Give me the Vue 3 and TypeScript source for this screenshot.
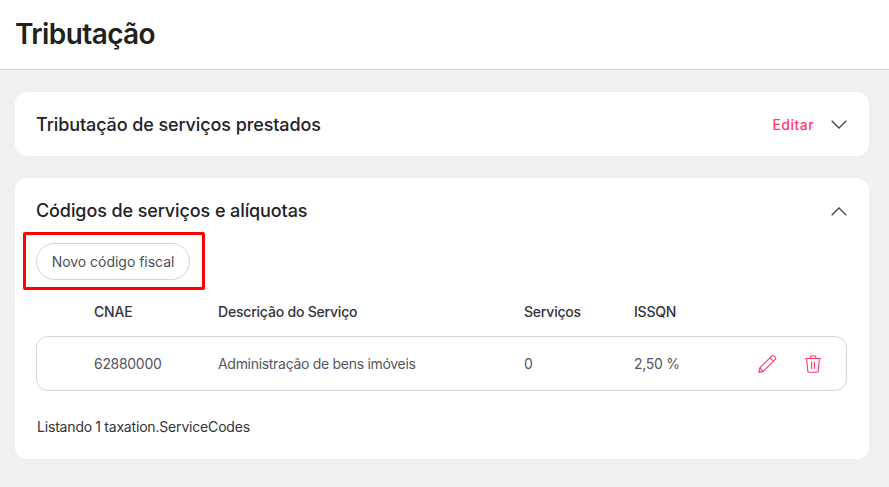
<template>
  <div class="page">
    <header class="page-header">
      <h1 class="page-title">Tributação</h1>
    </header>

    <main class="content">
      <section class="card card--closed">
        <h2 class="card__title">Tributação de serviços prestados</h2>
        <div class="card__actions">
          <a class="edit-link">Editar</a>
          <svg class="chevron" width="16" height="9" viewBox="0 0 16 9" fill="none">
            <path d="M.7.8 8 8 15.3.8" stroke="#444" stroke-width="1.3" />
          </svg>
        </div>
      </section>

      <section class="card card--open">
        <div class="card__head">
          <h2 class="card__title">Códigos de serviços e alíquotas</h2>
          <svg class="chevron" width="16" height="9" viewBox="0 0 16 9" fill="none">
            <path d="M.7 8.2 8 1l7.3 7.2" stroke="#444" stroke-width="1.3" />
          </svg>
        </div>

        <div class="new-code">
          <button class="new-code__btn">Novo código fiscal</button>
          <span class="new-code__mark" />
        </div>

        <div class="grid grid--head">
          <span v-for="col in columns" :key="col">{{ col }}</span>
        </div>

        <div v-for="row in rows" :key="row.cnae" class="grid grid--row">
          <span>{{ row.cnae }}</span>
          <span>{{ row.description }}</span>
          <span>{{ row.services }}</span>
          <span>{{ row.issqn }}</span>
          <div class="row-actions">
            <svg width="20" height="20" viewBox="0 0 20 20" fill="none" stroke="#ff3d68" stroke-width="1.1" stroke-linejoin="round">
              <path d="M1.8 18.4 2.8 14 14.6 2.2a2 2 0 0 1 2.8 0l.6.6a2 2 0 0 1 0 2.8L6.2 17.4Z" />
              <path d="M2.8 14 6.2 17.4M13 3.8l3.4 3.4" />
            </svg>
            <svg width="18" height="20" viewBox="0 0 18 20" fill="none" stroke="#ff3d68" stroke-width="1.1" stroke-linejoin="round">
              <path d="M1 4.5h16M2.6 4.5l1.2 12.6a1.2 1.2 0 0 0 1.2 1.1h8a1.2 1.2 0 0 0 1.2-1.1l1.2-12.6M5.8 4.5 6.6 2h4.8l.8 2.5M7.6 7.5v7.5M10.4 7.5v7.5" />
            </svg>
          </div>
        </div>

        <p class="listing">Listando {{ rows.length }} taxation.ServiceCodes</p>
      </section>
    </main>
  </div>
</template>

<script setup lang="ts">
const columns = ['CNAE', 'Descrição do Serviço', 'Serviços', 'ISSQN']

const rows = [
  { cnae: '62880000', description: 'Administração de bens imóveis', services: 0, issqn: '2,50 %' },
]
</script>

<style>
html, body {
  margin: 0;
  background: #f0f0f0;
}
</style>

<style scoped>
.page {
  min-height: 487px;
  background: #f0f0f0;
  font-family: Inter, "Noto Sans", sans-serif;
  color: #22222a;
}

.page-header {
  height: 69px;
  padding: 0 15px;
  display: flex;
  align-items: center;
  background: #fff;
  border-bottom: 1px solid #d6d6d6;
}

.page-title {
  margin: 0 0 2px;
  font-size: 28px;
  font-weight: 600;
  letter-spacing: -0.6px;
  color: #231f20;
}

.content {
  display: flex;
  flex-direction: column;
  gap: 22px;
  padding: 22px 20px 0 15px;
}

.card {
  background: #fff;
  border-radius: 12px;
}

.card--closed {
  height: 64px;
  padding: 0 22px 0 21px;
  display: flex;
  align-items: center;
  justify-content: space-between;
}

.card--open {
  height: 281px;
  box-sizing: border-box;
  padding: 0 22px 0 21px;
}

.card__head {
  height: 66px;
  display: flex;
  align-items: center;
  justify-content: space-between;
}

.card__title {
  margin: 0;
  font-size: 18px;
  font-weight: 450;
  letter-spacing: -0.1px;
  color: #22222a;
}

.card__head .card__title {
  margin-bottom: 1px;
}

.card__actions {
  display: flex;
  align-items: center;
  gap: 17px;
}

.edit-link {
  font-size: 14px;
  font-weight: 500;
  letter-spacing: 0.45px;
  color: #ff3d68;
}

.new-code {
  position: relative;
  width: 154px;
  height: 37px;
  margin-top: -1px;
}

.new-code__btn {
  width: 154px;
  height: 37px;
  padding: 0;
  background: #fff;
  border: 1px solid #d4d4d4;
  border-radius: 19px;
  font: 400 14px Inter, "Noto Sans", sans-serif;
  letter-spacing: -0.03px;
  color: #4a4f5a;
}

.new-code__mark {
  position: absolute;
  left: -13px;
  top: -11px;
  width: 176px;
  height: 52px;
  border: 3px solid #f00;
  border-radius: 2px;
}

.grid {
  display: grid;
  grid-template-columns: 124px 306px 110px 1fr auto;
  align-items: center;
  font-size: 14px;
}

.grid--head {
  height: 32px;
  margin-top: 15px;
  padding-left: 58px;
  font-weight: 500;
  letter-spacing: -0.2px;
  color: #33333b;
}

.grid--row {
  height: 53px;
  margin-top: 9px;
  padding: 0 24px 0 57px;
  border: 1px solid #d6d6d6;
  border-radius: 12px;
  letter-spacing: -0.3px;
  color: #55555e;
}

.row-actions {
  display: flex;
  align-items: center;
  gap: 27px;
}

.listing {
  margin: 27px 0 0 1px;
  font-size: 14px;
  letter-spacing: -0.18px;
  word-spacing: -0.4px;
  color: #33333b;
}

.chevron {
  display: block;
}
</style>
